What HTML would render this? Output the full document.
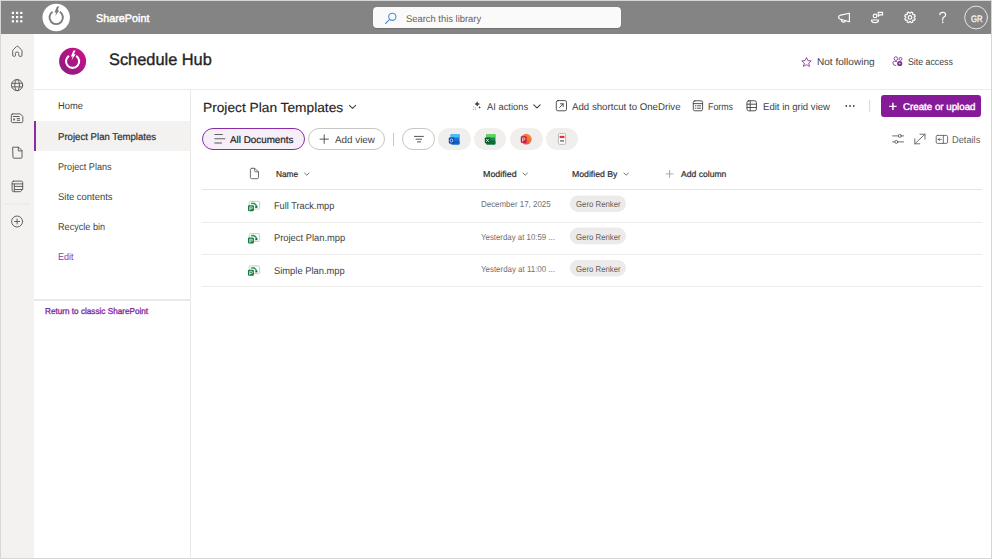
<!DOCTYPE html>
<html><head><meta charset="utf-8"><style>
html,body{margin:0;padding:0;width:992px;height:559px;overflow:hidden;background:#fff;}
body{position:relative;font-family:"Liberation Sans",sans-serif;text-rendering:geometricPrecision;}
.t{position:absolute;white-space:pre;line-height:1;transform-origin:0 0;}
.a{position:absolute;box-sizing:border-box;}
svg{position:absolute;overflow:visible;}
</style></head><body>
<!-- outer frame -->
<div class="a" style="left:0;top:0;width:992px;height:559px;border:1px solid #d6d6d6;"></div>
<!-- top bar -->
<div class="a" style="left:1px;top:1px;width:990px;height:32.5px;background:#848484;"></div>
<!-- waffle -->
<svg style="left:0;top:0" width="40" height="34">
  <g fill="#fff">
  <rect x="11.8" y="11.8" width="2.2" height="2.2"/><rect x="16" y="11.8" width="2.2" height="2.2"/><rect x="20.2" y="11.8" width="2.2" height="2.2"/>
  <rect x="11.8" y="16" width="2.2" height="2.2"/><rect x="16" y="16" width="2.2" height="2.2"/><rect x="20.2" y="16" width="2.2" height="2.2"/>
  <rect x="11.8" y="20.2" width="2.2" height="2.2"/><rect x="16" y="20.2" width="2.2" height="2.2"/><rect x="20.2" y="20.2" width="2.2" height="2.2"/>
  </g>
</svg>
<!-- sp logo -->
<svg style="left:0;top:0" width="90" height="34">
  <circle cx="56.2" cy="17.5" r="13.7" fill="#fff"/>
  <path d="M52.55 11.78 A6.7 6.7 0 1 0 59.85 11.78" fill="none" stroke="#7a7a7a" stroke-width="1.9"/>
  <path d="M57 6.5 L59.2 6.5 L57.5 10.3 L59.2 10.3 L55.2 16.2 L56.3 12.4 L54.5 12.4 Z" fill="#7a7a7a"/>
</svg>
<!-- search box -->
<div class="a" style="left:373px;top:6.5px;width:248px;height:21.5px;background:#fafafa;border-radius:4px;box-shadow:0 0.5px 1px rgba(0,0,0,0.15);"></div>
<svg style="left:0;top:0" width="400" height="34">
  <circle cx="392.3" cy="16.8" r="3.6" fill="none" stroke="#4a8fd4" stroke-width="1.1"/>
  <path d="M389.7 19.4 L385.6 23.5" stroke="#4a8fd4" stroke-width="1.1" stroke-linecap="round"/>
</svg>
<!-- right top icons -->
<svg style="left:0;top:0" width="992" height="34">
  <g fill="none" stroke="#fff" stroke-width="1.15" stroke-linejoin="round" stroke-linecap="round">
    <!-- megaphone -->
    <path d="M849.4 13.2 V21.8 L840.6 19.3 Q838.6 18.9 838.6 17.2 Q838.6 15.5 840.6 15.1 Z"/>
    <path d="M841.3 19.6 Q841.6 22.1 843.6 22.1 Q845.2 22.1 845.6 20.6"/>
    <!-- people/feedback -->
    <circle cx="875" cy="15.9" r="1.8"/>
    <path d="M871.5 20 H878.5 Q878.5 22.6 875 22.6 Q871.5 22.6 871.5 20 Z"/>
    <path d="M878.2 12.3 H882.6 V14.9 H879.6 L878.2 16.3 Z"/>
    <!-- gear -->
    <circle cx="910" cy="17.4" r="1.8"/>
    <path transform="rotate(22.5 910 17.4)" d="M914.04 16.25 L915.33 16.52 L915.33 18.28 L914.04 18.55 L913.67 19.45 L914.39 20.55 L913.15 21.79 L912.05 21.07 L911.15 21.44 L910.88 22.73 L909.12 22.73 L908.85 21.44 L907.95 21.07 L906.85 21.79 L905.61 20.55 L906.33 19.45 L905.96 18.55 L904.67 18.28 L904.67 16.52 L905.96 16.25 L906.33 15.35 L905.61 14.25 L906.85 13.01 L907.95 13.73 L908.85 13.36 L909.12 12.07 L910.88 12.07 L911.15 13.36 L912.05 13.73 L913.15 13.01 L914.39 14.25 L913.67 15.35 Z"/>
    <!-- help -->
    <path d="M939.9 14.6 Q940 12.3 942.7 12.3 Q945.6 12.4 945.6 14.7 Q945.6 16.3 944 17.1 Q942.7 17.8 942.7 19.2 V20.2"/>
    <circle cx="942.7" cy="22.3" r="0.3" fill="#fff"/>
    <!-- avatar -->
    <circle cx="976.1" cy="17.5" r="11.4" stroke="#f2f2f2" stroke-width="0.9"/>
  </g>
</svg>
<!-- left rail -->
<div class="a" style="left:1px;top:33.5px;width:33px;height:524.5px;background:#f3f2f1;"></div>
<svg style="left:0;top:0" width="40" height="240">
  <g fill="none" stroke="#616161" stroke-width="1" stroke-linejoin="round" stroke-linecap="round">
    <!-- home -->
    <path d="M12.7 50.8 Q12.7 50.2 13.2 49.8 L16.5 46.5 Q17.3 45.8 18.1 46.5 L21.5 49.8 Q22 50.2 22 50.8 V55.5 Q22 56.3 21.2 56.3 H19.6 Q18.8 56.3 18.8 55.5 V53.4 Q18.8 52 17.1 52 Q15.4 52 15.4 53.4 V55.5 Q15.4 56.3 14.6 56.3 H13.5 Q12.7 56.3 12.7 55.5 Z"/>
    <!-- globe -->
    <circle cx="17.1" cy="85.1" r="5.6"/>
    <ellipse cx="17.1" cy="85.1" rx="2.3" ry="5.6"/>
    <path d="M11.8 83.3 H22.4 M11.8 86.9 H22.4"/>
    <!-- news -->
    <path d="M12.6 113.9 H20.3 L22.8 116.4 V121.3 Q22.8 122.6 21.5 122.6 H12.6 Q11.3 122.6 11.3 121.3 V115.2 Q11.3 113.9 12.6 113.9 Z"/>
    <path d="M13.2 116.5 H19.3 M17.2 118.6 H19.6 M17.2 120.3 H19.6"/>
    <ellipse cx="14.1" cy="119.4" rx="0.9" ry="1.2" fill="#616161" stroke="none"/>
    <!-- file -->
    <path d="M13 147.2 H18.6 L22 150.6 V157.5 Q22 158.2 21.3 158.2 H13.7 Q13 158.2 13 157.5 Z"/>
    <path d="M18.3 147.2 V150.9 H22"/>
    <!-- lists -->
    <path d="M13.6 181.1 H21.2 Q22.7 181.1 22.7 182.6 V189.4 L20.4 191.7 H13.6 Q12.1 191.7 12.1 190.2 V182.6 Q12.1 181.1 13.6 181.1 Z"/>
    <path d="M12.1 183.9 H22.7 M14.3 186.4 H22.7 M14.3 189.5 H22.2 M14.3 183.9 V191.7"/>
    <!-- add -->
    <circle cx="17.1" cy="221.5" r="5.5"/>
    <path d="M17.1 219 V224 M14.6 221.5 H19.6"/>
  </g>
  <rect x="4" y="203.7" width="26.4" height="0.6" fill="#e1dfdd"/>
</svg>
<!-- header line -->
<div class="a" style="left:34px;top:88.6px;width:957px;height:1px;background:#ebebeb;"></div>
<!-- site logo -->
<svg style="left:0;top:0" width="120" height="90">
  <defs><linearGradient id="lg" x1="0.15" y1="0.9" x2="0.85" y2="0.1">
    <stop offset="0" stop-color="#8f1c7e"/><stop offset="1" stop-color="#c90f88"/></linearGradient></defs>
  <circle cx="72.6" cy="61.3" r="13.5" fill="url(#lg)"/>
  <path d="M69.01 55.76 A6.6 6.6 0 1 0 76.19 55.76" fill="none" stroke="#fff" stroke-width="2.1"/>
  <path d="M73.4 50.5 L75.6 50.5 L73.9 54.3 L75.6 54.3 L71.6 60.2 L72.7 56.5 L70.9 56.5 Z" fill="#fff"/>
</svg>
<!-- not following / site access icons -->
<svg style="left:0;top:0" width="992" height="90">
  <g fill="none" stroke="#8a3aa6" stroke-width="0.9" stroke-linejoin="round">
    <path d="M806.5 57.5 L807.9 60.6 L811.2 60.9 L808.7 63.1 L809.5 66.4 L806.5 64.7 L803.5 66.4 L804.3 63.1 L801.8 60.9 L805.1 60.6 Z"/>
    <circle cx="895.9" cy="58.6" r="1.8"/>
    <circle cx="900.5" cy="58.9" r="1.45"/>
    <path d="M897.2 61.4 H894.3 Q892.8 61.4 892.8 63 Q892.8 65.5 896.2 65.6"/>
  </g>
  <circle cx="899.7" cy="63.5" r="2.6" fill="#7e2a9c"/>
  <path d="M898.6 63.5 H900.8 M899.7 62.4 V64.6" stroke="#e9d6ef" stroke-width="0.6"/>
</svg>
<!-- nav -->
<div class="a" style="left:190.2px;top:89px;width:1px;height:469px;background:#ebe9e7;"></div>
<div class="a" style="left:34px;top:120.5px;width:156px;height:30.5px;background:#f3f2f1;"></div>
<div class="a" style="left:34px;top:120.5px;width:2px;height:30.5px;background:#8a2da5;"></div>
<div class="a" style="left:34px;top:299.3px;width:156px;height:1.4px;background:#ebe9e7;"></div>
<!-- list title chevron -->
<svg style="left:0;top:0" width="992" height="190">
  <g fill="none" stroke="#424242" stroke-width="0.9" stroke-linecap="round" stroke-linejoin="round">
    <path d="M349.4 105.4 L352.5 108.4 L355.6 105.4" stroke-width="1.1"/>
    <!-- AI actions chevron -->
    <path d="M533.8 104.8 L537 107.8 L540.2 104.8" stroke-width="1.1"/>
    <!-- shortcut -->
    <rect x="556.3" y="100.6" width="10.2" height="10.2" rx="1.6"/>
    <path d="M559.6 107.4 L563.2 103.8 M560.4 103.8 H563.2 V106.6"/>
    <!-- forms -->
    <rect x="693.3" y="100.8" width="9.3" height="10" rx="1.5"/>
    <path d="M693.3 103.6 H702.6 M695.2 105.8 H696 M697.5 105.8 H700.8 M695.2 108.2 H696 M697.5 108.2 H700.8"/>
    <!-- grid -->
    <rect x="747" y="100.8" width="9.4" height="10" rx="1.6"/>
    <path d="M747 104.2 H756.4 M747 107.5 H756.4 M750.2 100.8 V110.8"/>
  </g>
  <!-- sparkles -->
  <g fill="#424242">
    <path d="M477.2 101.3 Q477.7 103.4 479.9 103.9 Q477.7 104.4 477.2 106.5 Q476.7 104.4 474.5 103.9 Q476.7 103.4 477.2 101.3 Z"/>
    <path d="M479.6 105.9 Q479.9 107 481 107.3 Q479.9 107.6 479.6 108.7 Q479.3 107.6 478.2 107.3 Q479.3 107 479.6 105.9 Z"/>
  </g>
  <g fill="#9a9a9a"><circle cx="473.9" cy="107.1" r="0.6"/><circle cx="475.5" cy="107.8" r="0.55"/><circle cx="473.3" cy="109.3" r="0.6"/><circle cx="475.7" cy="109.5" r="0.55"/></g>
  <!-- ellipsis -->
  <g fill="#424242"><circle cx="846.3" cy="106" r="0.9"/><circle cx="850" cy="106" r="0.9"/><circle cx="853.7" cy="106" r="0.9"/></g>
  <rect x="869.4" y="99.7" width="0.7" height="12.6" fill="#c8c6c4"/>
</svg>
<!-- create button -->
<div class="a" style="left:880.9px;top:95.3px;width:100.6px;height:21.5px;background:#861a98;border-radius:3px;"></div>
<svg style="left:0;top:0" width="992" height="130">
  <path d="M892.9 102.7 V110 M889.2 106.35 H896.6" stroke="#fff" stroke-width="1.45" stroke-linecap="butt"/>
</svg>
<!-- pills -->
<div class="a" style="left:202px;top:128.1px;width:102.5px;height:21.9px;border:1.8px solid #8a2da5;background:#f7eff8;border-radius:11px;"></div>
<div class="a" style="left:307.5px;top:128.1px;width:77.5px;height:21.9px;border:1px solid #c8c6c4;background:#fff;border-radius:11px;"></div>
<div class="a" style="left:402px;top:128.1px;width:33.4px;height:21.9px;border:1px solid #c8c6c4;background:#fff;border-radius:11px;"></div>
<div class="a" style="left:438px;top:128.1px;width:32.6px;height:21.9px;background:#f0efed;border-radius:11px;"></div>
<div class="a" style="left:473.7px;top:128.1px;width:32.8px;height:21.9px;background:#f0efed;border-radius:11px;"></div>
<div class="a" style="left:510px;top:128.1px;width:32.6px;height:21.9px;background:#f0efed;border-radius:11px;"></div>
<div class="a" style="left:545.6px;top:128.1px;width:32.9px;height:21.9px;background:#f0efed;border-radius:11px;"></div>
<div class="a" style="left:393.2px;top:133px;width:0.8px;height:12.8px;background:#c8c6c4;"></div>
<svg style="left:0;top:0" width="992" height="190">
  <g stroke="#424242" stroke-width="0.9" stroke-linecap="round" fill="none">
    <!-- all docs lines -->
    <path d="M214.4 134.5 H222.8 M214.4 138.7 H225.3" stroke="#616161" stroke-width="1.1" stroke-linecap="butt"/><path d="M214.4 143 H221.9" stroke="#8a8886" stroke-width="1.5" stroke-linecap="butt"/>
    <!-- plus -->
    <path d="M324.2 134.9 V143.4 M320 139.15 H328.4"/>
    <!-- filter -->
    <path d="M414 136.4 H423.8 M415.7 139.2 H422 M417 141.9 H421" stroke-linecap="butt"/>
  </g>
  <!-- outlook -->
  <rect x="450.6" y="134" width="8.9" height="10.6" rx="1.2" fill="#1a73d9"/>
  <rect x="450.6" y="134" width="8.9" height="3.6" rx="1" fill="#45c0f5"/>
  <rect x="452" y="140.5" width="7.5" height="4.1" rx="0.8" fill="#0f5fc4"/>
  <rect x="448.8" y="137.6" width="5.4" height="5.9" rx="0.9" fill="#0b3fa8"/>
  <rect x="450.2" y="139" width="2.6" height="3.1" rx="1.1" fill="none" stroke="#fff" stroke-width="0.75"/>
  <!-- excel -->
  <rect x="486.3" y="134" width="9.1" height="10.6" rx="1.2" fill="#17894a"/>
  <rect x="486.3" y="134" width="9.1" height="3.4" rx="1" fill="#5cd65f"/>
  <rect x="486.3" y="140.6" width="9.1" height="4" rx="0.8" fill="#0f6b37"/>
  <rect x="484.8" y="137.4" width="5.4" height="5.9" rx="0.9" fill="#0e5c2f"/>
  <path d="M486.2 138.9 L488.8 141.9 M488.8 138.9 L486.2 141.9" stroke="#fff" stroke-width="0.75"/>
  <!-- powerpoint -->
  <defs><linearGradient id="pg" x1="0" y1="1" x2="1" y2="0"><stop offset="0" stop-color="#d83b53"/><stop offset="1" stop-color="#ff9a2e"/></linearGradient></defs>
  <circle cx="526.3" cy="139.2" r="5.4" fill="url(#pg)"/>
  <rect x="520.8" y="136.2" width="5.8" height="6.6" rx="0.9" fill="#c41d3c"/>
  <path d="M522.6 141.6 V137.9 H523.9 Q525 137.9 525 139 Q525 140 523.9 140 H522.6" fill="none" stroke="#fbe3e3" stroke-width="0.8"/>
  <!-- pdf -->
  <rect x="558.4" y="133.6" width="7.2" height="10.7" rx="1" fill="#fff" stroke="#9e9e9e" stroke-width="0.7"/>
  <rect x="559.6" y="135.8" width="4.9" height="2.3" fill="#e0303a"/>
  <rect x="560.1" y="140" width="3.9" height="1.8" fill="#8a8a8a"/>
  <!-- right tools -->
  <g fill="none" stroke="#616161" stroke-width="0.9" stroke-linecap="round">
    <path d="M892.6 135.9 H903.6 M892.6 141.9 H903.6"/>
    <circle cx="899.8" cy="135.9" r="1.5" fill="#fff"/>
    <circle cx="896.3" cy="141.9" r="1.5" fill="#fff"/>
    <path d="M914.8 143.8 L925 134.2 M914.8 138.8 V143.8 H919.8 M920 134.2 H925 V139.2"/>
    <rect x="936.2" y="135.4" width="11.4" height="8" rx="1.3"/>
    <path d="M943.3 135.4 V143.4 M938.2 139.4 H941.3 M939.5 138.1 L938.2 139.4 L939.5 140.7"/>
  </g>
</svg>
<!-- table -->
<div class="a" style="left:202px;top:188.6px;width:779.5px;height:1.2px;background:#e6e4e2;"></div>
<div class="a" style="left:202px;top:221.8px;width:779.5px;height:1px;background:#efedeb;"></div>
<div class="a" style="left:202px;top:253.8px;width:779.5px;height:1px;background:#efedeb;"></div>
<div class="a" style="left:202px;top:285.8px;width:779.5px;height:1px;background:#efedeb;"></div>
<svg style="left:0;top:0" width="992" height="300">
  <g fill="none" stroke="#616161" stroke-width="0.9" stroke-linejoin="round" stroke-linecap="round">
    <path d="M251.8 168.3 H254.8 L258.5 172 V177.3 Q258.5 178.7 257.1 178.7 H251.8 Q250.4 178.7 250.4 177.3 V169.7 Q250.4 168.3 251.8 168.3 Z"/>
    <path d="M254.6 168.4 V170.6 Q254.6 171.8 255.8 171.8 H258.4"/>
    <path d="M304.6 173.1 L306.8 175.2 L309 173.1"/>
    <path d="M523 173.1 L525.2 175.2 L527.4 173.1"/>
    <path d="M624 173.1 L626.2 175.2 L628.4 173.1"/>
    <path d="M669.6 170.4 V177.4 M666.1 173.9 H673.1" stroke="#a19f9d"/>
  </g>
  <!-- persona pills -->
  <rect x="569.8" y="195.4" width="56.2" height="16.6" rx="8.3" fill="#edebe9"/>
  <rect x="569.8" y="227.6" width="56.2" height="16.6" rx="8.3" fill="#edebe9"/>
  <rect x="569.8" y="259.9" width="56.2" height="16.6" rx="8.3" fill="#edebe9"/>
  <!-- project file icons -->
  <g id="pf">
    <rect x="249.2" y="201.3" width="10.4" height="7.8" rx="1.2" fill="#fff" stroke="#c4c4c4" stroke-width="0.9"/>
    <path d="M251.6 203.5 Q254.8 202.2 256.9 206.6" fill="none" stroke="#21a366" stroke-width="1.5" stroke-linecap="round"/>
    <path d="M255.6 205.6 L257.8 207.6 L255.2 207.9 Z" fill="#0b5a2b"/>
    <rect x="248" y="205.2" width="5.9" height="6" rx="1.1" fill="#107c41"/>
    <path d="M249.8 210.3 V206.8 H251.4 Q252.5 206.8 252.5 207.8 Q252.5 208.8 251.4 208.8 H249.8" fill="none" stroke="#e6f2ea" stroke-width="0.9"/>
  </g>
  <use href="#pf" y="32.3"/>
  <use href="#pf" y="64.6"/>
</svg>

<span class="t" style="left:95.60px;top:14.00px;font-size:11.0px;font-weight:400;color:#ffffff;transform:scaleX(0.9811);-webkit-text-stroke:0.45px #ffffff;">SharePoint</span>
<span class="t" style="left:405.80px;top:15.00px;font-size:9.8px;font-weight:400;color:#616161;transform:scaleX(0.9588);">Search this library</span>
<span class="t" style="left:970.60px;top:14.00px;font-size:9.4px;font-weight:400;color:#ffffff;transform:scaleX(0.8227);-webkit-text-stroke:0.25px #ffffff;">GR</span>
<span class="t" style="left:109.10px;top:52.00px;font-size:16.5px;font-weight:400;color:#242424;transform:scaleX(0.9917);-webkit-text-stroke:0.35px #242424;">Schedule Hub</span>
<span class="t" style="left:816.80px;top:58.00px;font-size:9.8px;font-weight:400;color:#424242;transform:scaleX(1.0266);">Not following</span>
<span class="t" style="left:908.20px;top:58.00px;font-size:9.8px;font-weight:400;color:#424242;transform:scaleX(0.8940);">Site access</span>
<span class="t" style="left:57.80px;top:102.00px;font-size:9.8px;font-weight:400;color:#424242;transform:scaleX(0.9563);">Home</span>
<span class="t" style="left:57.80px;top:133.00px;font-size:9.8px;font-weight:400;color:#323130;transform:scaleX(0.9815);-webkit-text-stroke:0.22px #323130;">Project Plan Templates</span>
<span class="t" style="left:57.80px;top:163.00px;font-size:9.8px;font-weight:400;color:#424242;transform:scaleX(0.9283);">Project Plans</span>
<span class="t" style="left:57.80px;top:193.00px;font-size:9.8px;font-weight:400;color:#424242;transform:scaleX(0.9619);">Site contents</span>
<span class="t" style="left:57.80px;top:223.00px;font-size:9.8px;font-weight:400;color:#424242;transform:scaleX(0.9298);">Recycle bin</span>
<span class="t" style="left:57.80px;top:253.00px;font-size:9.8px;font-weight:400;color:#8f3aa8;transform:scaleX(0.9237);">Edit</span>
<span class="t" style="left:45.40px;top:307.00px;font-size:8.6px;font-weight:400;color:#7f2a9c;transform:scaleX(0.9511);-webkit-text-stroke:0.32px #7f2a9c;">Return to classic SharePoint</span>
<span class="t" style="left:203.20px;top:101.00px;font-size:13.2px;font-weight:400;color:#242424;transform:scaleX(1.0411);-webkit-text-stroke:0.15px #242424;">Project Plan Templates</span>
<span class="t" style="left:486.90px;top:103.00px;font-size:9.8px;font-weight:400;color:#424242;transform:scaleX(0.9551);">AI actions</span>
<span class="t" style="left:572.20px;top:103.00px;font-size:9.8px;font-weight:400;color:#424242;transform:scaleX(0.9870);">Add shortcut to OneDrive</span>
<span class="t" style="left:708.40px;top:103.00px;font-size:9.8px;font-weight:400;color:#424242;transform:scaleX(0.9004);">Forms</span>
<span class="t" style="left:763.40px;top:103.00px;font-size:9.8px;font-weight:400;color:#424242;transform:scaleX(0.9763);">Edit in grid view</span>
<span class="t" style="left:903.20px;top:103.00px;font-size:9.8px;font-weight:400;color:#ffffff;transform:scaleX(0.9931);-webkit-text-stroke:0.4px #ffffff;">Create or upload</span>
<span class="t" style="left:229.70px;top:136.00px;font-size:9.8px;font-weight:400;color:#242424;transform:scaleX(1.0051);-webkit-text-stroke:0.22px #242424;">All Documents</span>
<span class="t" style="left:334.50px;top:136.00px;font-size:9.8px;font-weight:400;color:#424242;transform:scaleX(1.0034);">Add view</span>
<span class="t" style="left:951.70px;top:136.00px;font-size:9.8px;font-weight:400;color:#616161;transform:scaleX(0.9447);">Details</span>
<span class="t" style="left:275.90px;top:170.00px;font-size:8.6px;font-weight:400;color:#323130;transform:scaleX(0.9634);-webkit-text-stroke:0.22px #323130;">Name</span>
<span class="t" style="left:482.70px;top:170.00px;font-size:8.6px;font-weight:400;color:#323130;transform:scaleX(1.0336);-webkit-text-stroke:0.22px #323130;">Modified</span>
<span class="t" style="left:572.00px;top:170.00px;font-size:8.6px;font-weight:400;color:#323130;transform:scaleX(1.0104);-webkit-text-stroke:0.22px #323130;">Modified By</span>
<span class="t" style="left:680.80px;top:170.00px;font-size:8.6px;font-weight:400;color:#323130;transform:scaleX(0.9997);-webkit-text-stroke:0.22px #323130;">Add column</span>
<span class="t" style="left:274.00px;top:202.00px;font-size:9.8px;font-weight:400;color:#424242;transform:scaleX(0.9384);">Full Track.mpp</span>
<span class="t" style="left:274.00px;top:234.00px;font-size:9.8px;font-weight:400;color:#424242;transform:scaleX(0.9541);">Project Plan.mpp</span>
<span class="t" style="left:274.00px;top:267.00px;font-size:9.8px;font-weight:400;color:#424242;transform:scaleX(0.9557);">Simple Plan.mpp</span>
<span class="t" style="left:480.50px;top:200.00px;font-size:8.6px;font-weight:400;color:#707070;transform:scaleX(0.9227);">December 17, 2025</span>
<span class="t" style="left:480.50px;top:233.00px;font-size:8.6px;font-weight:400;color:#707070;transform:scaleX(0.9140);">Yesterday at 10:59 ...</span>
<span class="t" style="left:480.50px;top:265.00px;font-size:8.6px;font-weight:400;color:#707070;transform:scaleX(0.9213);">Yesterday at 11:00 ...</span>
<span class="t" style="left:575.60px;top:200.00px;font-size:8.6px;font-weight:400;color:#616161;transform:scaleX(0.9079);">Gero Renker</span>
<span class="t" style="left:575.60px;top:233.00px;font-size:8.6px;font-weight:400;color:#616161;transform:scaleX(0.9079);">Gero Renker</span>
<span class="t" style="left:575.60px;top:265.00px;font-size:8.6px;font-weight:400;color:#616161;transform:scaleX(0.9079);">Gero Renker</span>
</body></html>
